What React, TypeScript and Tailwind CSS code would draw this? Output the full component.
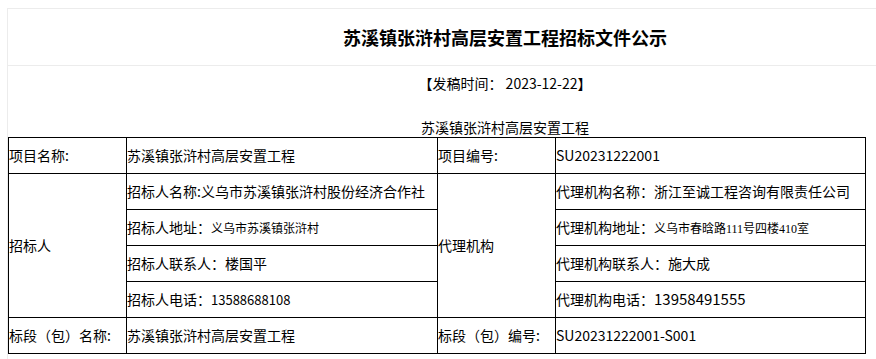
const font = { fontFamily: '"Noto Sans CJK SC", "Noto Sans", sans-serif' };

function Cell({ children, rowSpan }: { children: React.ReactNode; rowSpan?: number }) {
  return (
    <td rowSpan={rowSpan} className="h-[36px] border border-black p-0 align-middle whitespace-nowrap">
      {children}
    </td>
  );
}

export default function App() {
  return (
    <div className="w-[876px] h-[359px] overflow-hidden bg-white text-black text-[14px]" style={font}>
      <div className="ml-[7px] mt-[8px] w-[996px] h-[400px] border border-[#ececec]">
        <div className="h-[57px] flex items-center justify-center border-b border-[#ececec] text-[18px] font-bold">
          苏溪镇张浒村高层安置工程招标文件公示
        </div>
        <p className="pt-[7px] text-center leading-[20px]">【发稿时间： 2023-12-22】</p>
        <p className="mt-[24px] text-center leading-[20px]">苏溪镇张浒村高层安置工程</p>
        <table className="w-[857px] table-fixed border-collapse">
          <colgroup>
            <col className="w-[118px]" />
            <col className="w-[311px]" />
            <col className="w-[118px]" />
            <col className="w-[310px]" />
          </colgroup>
          <tbody>
            <tr>
              <Cell>项目名称:</Cell>
              <Cell>苏溪镇张浒村高层安置工程</Cell>
              <Cell>项目编号:</Cell>
              <Cell>SU20231222001</Cell>
            </tr>
            <tr>
              <Cell rowSpan={4}>招标人</Cell>
              <Cell>招标人名称:义乌市苏溪镇张浒村股份经济合作社</Cell>
              <Cell rowSpan={4}>代理机构</Cell>
              <Cell>代理机构名称：浙江至诚工程咨询有限责任公司</Cell>
            </tr>
            <tr>
              <Cell>
                招标人地址：<span className="text-[12px]">义乌市苏溪镇张浒村</span>
              </Cell>
              <Cell>
                代理机构地址：
                <span className="text-[12px]" style={{ fontFamily: '"Liberation Serif", "Noto Sans CJK SC", serif' }}>
                  义乌市春晗路111号四楼410室
                </span>
              </Cell>
            </tr>
            <tr>
              <Cell>招标人联系人：楼国平</Cell>
              <Cell>代理机构联系人：施大成</Cell>
            </tr>
            <tr>
              <Cell>
                招标人电话：<span className="text-[13px]">13588688108</span>
              </Cell>
              <Cell>
                代理机构电话：<span className="text-[15px]">13958491555</span>
              </Cell>
            </tr>
            <tr>
              <Cell>标段（包）名称:</Cell>
              <Cell>苏溪镇张浒村高层安置工程</Cell>
              <Cell>标段（包）编号:</Cell>
              <Cell>SU20231222001-S001</Cell>
            </tr>
          </tbody>
        </table>
      </div>
    </div>
  );
}
